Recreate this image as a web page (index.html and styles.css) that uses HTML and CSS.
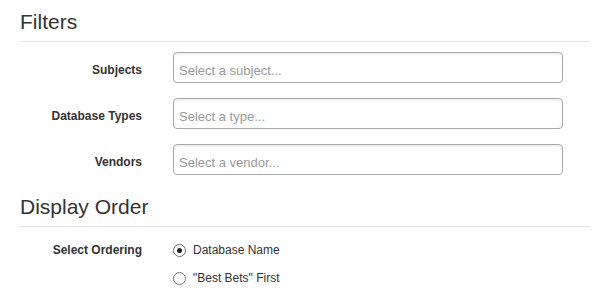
FILE: index.html
```html
<!DOCTYPE html>
<html lang="en">
<head>
    <meta charset="UTF-8">
    <meta name="viewport" content="width=device-width, initial-scale=1.0">
    <title>Database Filters</title>
    <link rel="stylesheet" href="styles.css">
</head>
<body>
    <div id="page">
        <h3 class="section-title">Filters</h3>
        <div class="form-grid filters">
            <label class="field-label" for="subjects">Subjects</label>
            <input type="text" id="subjects" class="field-input" placeholder="Select a subject...">

            <label class="field-label" for="db-types">Database Types</label>
            <input type="text" id="db-types" class="field-input" placeholder="Select a type...">

            <label class="field-label" for="vendors">Vendors</label>
            <input type="text" id="vendors" class="field-input" placeholder="Select a vendor...">
        </div>

        <h3 class="section-title">Display Order</h3>
        <div class="form-grid ordering">
            <span class="field-label radio-label">Select Ordering</span>
            <div class="radio-list">
                <label class="radio-row">
                    <input type="radio" name="ordering" value="name" checked> Database Name
                </label>
                <label class="radio-row">
                    <input type="radio" name="ordering" value="best"> "Best Bets" First
                </label>
            </div>
        </div>
    </div>
</body>
</html>
```

FILE: styles.css
```css
body {
    margin: 0;
    font-family: "Liberation Sans", Arial, sans-serif;
    color: #333;
    background: #fff;
}
#page {
    width: 570px;
    padding: 10px 0 0 20px;
}
.section-title {
    margin: 0;
    font-size: 21px;
    font-weight: normal;
    line-height: 24px;
    padding-bottom: 7px;
    border-bottom: 1px solid #e5e5e5;
}
.form-grid {
    display: grid;
    grid-template-columns: 122px 390px;
    column-gap: 31px;
    row-gap: 15px;
    align-items: start;
}
.filters {
    margin: 10px 0 20px;
}
.ordering {
    margin-top: 14px;
}
.field-label {
    text-align: right;
    font-size: 12px;
    font-weight: bold;
    line-height: 17px;
    padding-top: 10px;
}
.radio-label {
    padding-top: 0;
    line-height: 18px;
}
.field-input {
    box-sizing: border-box;
    width: 390px;
    height: 31px;
    margin: 0;
    padding: 5px 5px 0;
    border: 1px solid #a8a8a8;
    border-radius: 4px;
    box-shadow: inset 0 2px 2px rgba(0, 0, 0, 0.06);
    font-family: "Liberation Sans", Arial, sans-serif;
    font-size: 13px;
    color: #333;
    outline: none;
}
.field-input::placeholder {
    color: #999;
}
.radio-list {
    display: flex;
    flex-direction: column;
    gap: 10px;
}
.radio-row {
    display: flex;
    align-items: center;
    gap: 7px;
    font-size: 12px;
    line-height: 18px;
}
.radio-row input {
    appearance: none;
    -webkit-appearance: none;
    box-sizing: border-box;
    width: 13px;
    height: 13px;
    margin: 0;
    border: 1px solid #6e6e6e;
    border-radius: 50%;
    background: #fff;
    display: grid;
    place-content: center;
}
.radio-row input:checked::before {
    content: "";
    width: 5px;
    height: 5px;
    border-radius: 50%;
    background: #222;
}
```
